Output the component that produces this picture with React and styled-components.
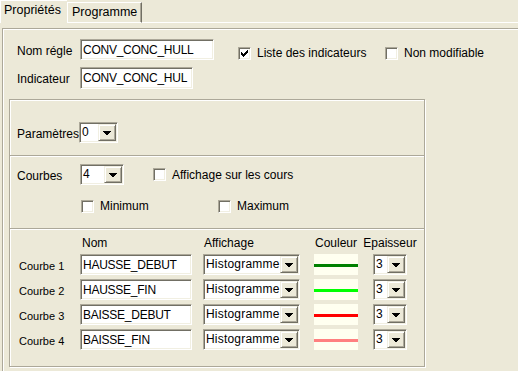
import React from "react";
import styled, { createGlobalStyle, css } from "styled-components";

const Global = createGlobalStyle`
  html, body { margin: 0; padding: 0; background: #ECE9D8; overflow: hidden; }
  body { font-family: "Liberation Sans", Arial, sans-serif; font-size: 12px; color: #000; }
  * { box-sizing: border-box; }
`;

const sunken = css`
  border: 1px solid;
  border-color: #ACA899 #FFFFFF #FFFFFF #ACA899;
  box-shadow: inset 1px 1px 0 #716F64, inset -1px -1px 0 #F1EFE2;
`;

const raised = css`
  border: 1px solid;
  border-color: #F1EFE2 #716F64 #716F64 #F1EFE2;
  box-shadow: inset 1px 1px 0 #FFFFFF, inset -1px -1px 0 #ACA899;
`;

const Page = styled.div`
  width: 518px;
  height: 371px;
  overflow: hidden;
  display: flex;
  flex-direction: column;
`;

const TabStrip = styled.div`
  display: flex;
  align-items: flex-end;
  height: 23px;
  flex: none;
`;

const Tab = styled.div`
  height: ${(p) => (p.$active ? "23px" : "21px")};
  width: ${(p) => p.$w}px;
  border-top: 1px solid #fff;
  border-left: 1px solid #fff;
  border-right: ${(p) => (p.$active ? "none" : "1px solid #716F64")};
  border-bottom: ${(p) => (p.$active ? "none" : "1px solid #fff")};
  box-shadow: ${(p) => (p.$active ? "none" : "inset -1px 0 0 #ACA899")};
  padding: 2px 0 0 ${(p) => (p.$active ? 3 : 4)}px;
  line-height: 14px;
  font-size: 12.5px;
  white-space: nowrap;
`;

const TabFill = styled.div`
  flex: 1;
  height: 1px;
  background: #fff;
`;

const Frame = styled.div`
  margin: 5px 0 0 2px;
  width: 560px;
  height: 400px;
  flex: none;
  border: 1px solid #ACA899;
  box-shadow: inset 1px 1px 0 #fff;
  display: flex;
  flex-direction: column;
`;

const TopSection = styled.div`
  height: 70px;
  padding: 10px 0 0 14px;
  display: flex;
  flex-direction: column;
  gap: 7px;
`;

const FieldRow = styled.div`
  display: flex;
  align-items: center;
`;

const Label = styled.div`
  width: ${(p) => p.$w}px;
  flex: none;
  padding-top: 2px;
  line-height: 14px;
  white-space: nowrap;
  font-size: ${(p) => p.$size || 12}px;
`;

const TextBox = styled.div`
  ${sunken};
  width: ${(p) => p.$w}px;
  height: ${(p) => p.$h || 21}px;
  background: #fff;
  padding: 0 1px 0 2px;
  display: flex;
  align-items: center;
  font-size: 12px;
  letter-spacing: -0.25px;
  white-space: nowrap;
  overflow: hidden;
  flex: none;
`;

const CheckItem = styled.div`
  display: flex;
  align-items: center;
  gap: 6px;
  width: ${(p) => (p.$w ? `${p.$w}px` : "auto")};
  margin-left: ${(p) => p.$ml || 0}px;
  align-self: ${(p) => p.$self || "auto"};
  line-height: 14px;
  white-space: nowrap;
  flex: none;
`;

const Box = styled.div`
  ${sunken};
  width: 13px;
  height: 13px;
  background: #fff;
  display: flex;
  align-items: center;
  justify-content: center;
  flex: none;
`;

const GroupBox = styled.div`
  margin-left: 6px;
  width: 416px;
  height: 268px;
  border: 1px solid #ACA899;
  box-shadow: inset 1px 1px 0 #fff, 1px 1px 0 #fff;
  display: flex;
  flex-direction: column;
`;

const Section = styled.div`
  height: ${(p) => (p.$h ? `${p.$h}px` : "auto")};
  flex: ${(p) => (p.$grow ? 1 : "none")};
  border-top: ${(p) => (p.$sep ? "1px solid #ACA899" : "none")};
  box-shadow: ${(p) => (p.$sep ? "inset 0 1px 0 #fff" : "none")};
  padding: ${(p) => p.$pad};
  display: flex;
  flex-direction: column;
`;

const Row = styled.div`
  display: flex;
  align-items: center;
  margin-top: ${(p) => p.$mt || 0}px;
`;

const SelectWrap = styled.div`
  ${sunken};
  width: ${(p) => p.$w}px;
  height: 21px;
  padding: 1px;
  background: #fff;
  display: flex;
  flex: none;
  position: relative;
`;

const SelectText = styled.div`
  flex: 1;
  min-width: 0;
  overflow: hidden;
  white-space: nowrap;
  padding-left: 1px;
  font-size: 12px;
  letter-spacing: 0.2px;
  line-height: 17px;
`;

const DropButton = styled.div`
  ${raised};
  width: 18px;
  height: 17px;
  background: #ECE9D8;
  display: flex;
  align-items: center;
  justify-content: center;
  flex: none;
`;

const Table = styled.div`
  display: grid;
  grid-template-columns: 61px 123px 111px 59px 34px;
  grid-template-rows: 14px repeat(4, 21px);
  row-gap: 4px;
  padding: 7px 0 0 9px;
`;

const Head = styled.div`
  line-height: 14px;
  white-space: nowrap;
  padding-left: ${(p) => p.$pl || 0}px;
  display: flex;
  justify-content: ${(p) => (p.$center ? "center" : "flex-start")};
  width: ${(p) => (p.$w ? `${p.$w}px` : "auto")};
`;

const RowLabel = styled.div`
  font-size: 11px;
  line-height: 14px;
  align-self: center;
  padding-top: 2px;
  white-space: nowrap;
`;

const Swatch = styled.div`
  width: 44px;
  height: 21px;
  background: #FFFFF0;
  display: flex;
  align-items: center;
`;

const SwatchLine = styled.div`
  width: 100%;
  height: 3px;
  margin-top: 1px;
  background: ${(p) => p.$color};
`;

const Arrow = () => (
  <svg width="8" height="4" viewBox="0 0 8 4" shapeRendering="crispEdges">
    <rect x="0" y="0" width="8" height="1" fill="#000" />
    <rect x="1" y="1" width="6" height="1" fill="#000" />
    <rect x="2" y="2" width="4" height="1" fill="#000" />
    <rect x="3" y="3" width="2" height="1" fill="#000" />
  </svg>
);

const Check = () => (
  <svg width="7" height="7" viewBox="0 0 7 7" shapeRendering="crispEdges">
    <polygon points="0,2 2,4 7,-1 7,2 2,7 0,5" fill="#000" />
  </svg>
);

const Select = ({ w, value }) => (
  <SelectWrap $w={w}>
    <SelectText>{value}</SelectText>
    <DropButton>
      <Arrow />
    </DropButton>
  </SelectWrap>
);

const Checkbox = ({ checked, label, ...rest }) => (
  <CheckItem {...rest}>
    <Box>{checked && <Check />}</Box>
    <span>{label}</span>
  </CheckItem>
);

const curves = [
  { name: "HAUSSE_DEBUT", color: "#008000" },
  { name: "HAUSSE_FIN", color: "#00FF00" },
  { name: "BAISSE_DEBUT", color: "#FF0000" },
  { name: "BAISSE_FIN", color: "#FF8080" },
];

export default function App() {
  return (
    <Page>
      <Global />
      <TabStrip>
        <Tab $active $w={67}>Propriétés</Tab>
        <Tab $w={75}>Programme</Tab>
        <TabFill />
      </TabStrip>
      <Frame>
        <TopSection>
          <FieldRow>
            <Label $w={63}>Nom régle</Label>
            <TextBox $w={134}>CONV_CONC_HULL</TextBox>
            <Checkbox checked label="Liste des indicateurs" $w={147} $ml={24} $self="flex-end" />
            <Checkbox label="Non modifiable" $self="flex-end" />
          </FieldRow>
          <FieldRow>
            <Label $w={63}>Indicateur</Label>
            <TextBox $w={113} $h={22}>CONV_CONC_HUL</TextBox>
          </FieldRow>
        </TopSection>
        <GroupBox>
          <Section $h={55} $pad="22px 0 0 7px">
            <Row>
              <Label $w={62}>Paramètres</Label>
              <Select w={39} value="0" />
            </Row>
          </Section>
          <Section $sep $h={73} $pad="8px 0 0 7px">
            <Row>
              <Label $w={63}>Courbes</Label>
              <Select w={44} value="4" />
              <Checkbox label="Affichage sur les cours" $ml={29} />
            </Row>
            <Row $mt={14}>
              <Checkbox label="Minimum" $ml={64} $w={137} />
              <Checkbox label="Maximum" />
            </Row>
          </Section>
          <Section $sep $grow $pad="0">
            <Table>
              <div />
              <Head $pl={2}>Nom</Head>
              <Head $pl={1}>Affichage</Head>
              <Head $center $w={44}>Couleur</Head>
              <Head $center $w={34}>Epaisseur</Head>
              {curves.map((c, i) => (
                <React.Fragment key={c.name}>
                  <RowLabel>Courbe {i + 1}</RowLabel>
                  <TextBox $w={112}>{c.name}</TextBox>
                  <Select w={97} value="Histogramme" />
                  <Swatch>
                    <SwatchLine $color={c.color} />
                  </Swatch>
                  <Select w={34} value="3" />
                </React.Fragment>
              ))}
            </Table>
          </Section>
        </GroupBox>
      </Frame>
    </Page>
  );
}
